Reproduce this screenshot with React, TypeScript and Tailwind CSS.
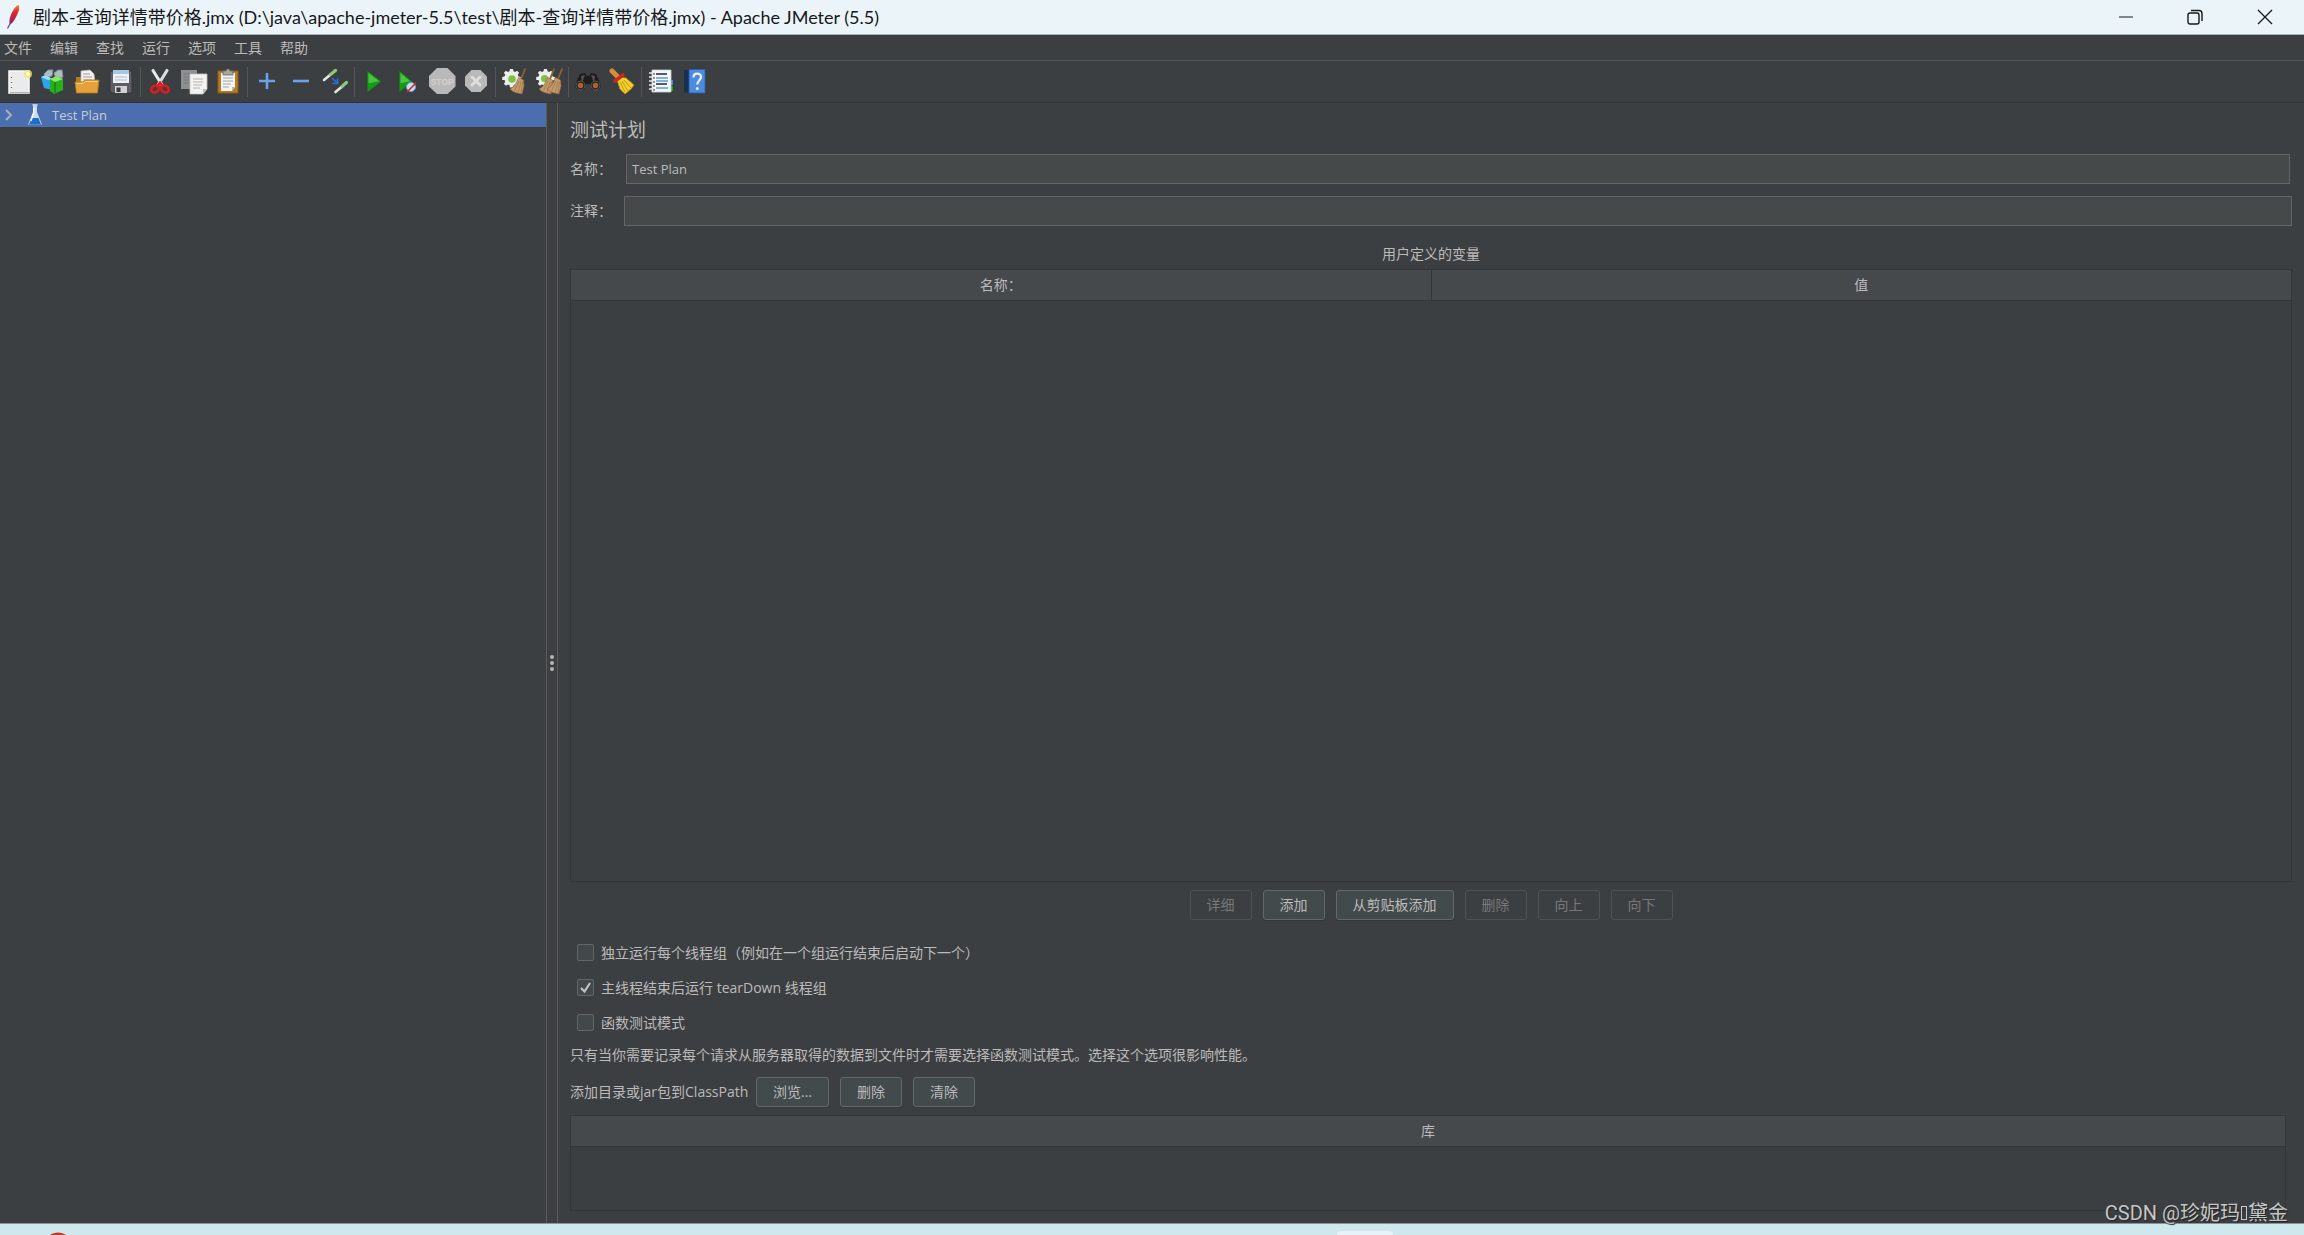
import React, { useState } from "react";

type IconName =
  | "new" | "templates" | "open" | "save" | "cut" | "copy" | "paste" | "plus" | "minus" | "toggle"
  | "start" | "startNoPause" | "stop" | "shutdown" | "clear" | "clearAll" | "search" | "resetSearch"
  | "function" | "help";

const GEAR =
  "M8 1h3l.5 2.300 1.600.700 2-1.300 2 2-1.300 2 .7 1.700 2.300.5v3l-2.300.5-.7 1.700 1.300 2-2 2-2-1.300-1.600.700L11 19.500H8l-.5-2.300-1.600-.7-2 1.300-2-2 1.300-2-.7-1.700L.2 11.900v-3l2.300-.5.7-1.700-1.300-2 2-2 2 1.300 1.600-.7z";

function Broom() {
  return (
    <g>
      <path d="M23 1 19 11" stroke="#8a6238" strokeWidth="1.800" strokeLinecap="round" />
      <path d="M16.500 9.500 21.500 12l.5 6-2 8-5-1-4-1.500-3-2.500c4-2 6-5 8.500-11.500z" fill="#c39a6b" stroke="#8a6238" strokeWidth=".6" />
      <path d="m17 13-4.500 10M19 13.500l-3 11.500M20.500 14l-1.500 11" stroke="#9a7345" strokeWidth=".7" fill="none" />
    </g>
  );
}

function Glyph({ name }: { name: IconName }) {
  switch (name) {
    case "new":
      return (
        <g>
          <path d="M3 3h20v22H3z" fill="#ebebeb" stroke="#fafafa" strokeWidth="1.500" />
          <path d="M4 24.500h19" stroke="#b5b5b5" />
          <path d="M5.500 9v1M5.500 14v1M5.500 19v1" stroke="#666" strokeWidth="1.200" />
          <circle cx="22" cy="6" r="4" fill="#f5e663" opacity=".8" />
          <circle cx="22" cy="6" r="2" fill="#fffce0" />
        </g>
      );
    case "templates":
      return (
        <g>
          <path d="M4 6 8 2h5l-1 6-7 2zM14 5l4-3h4l1 7-7 3z" fill="#aebcc4" stroke="#7d8a92" />
          <path d="m1 9 5-2 6 4v11l-8-2z" fill="#2aa5e8" />
          <path d="m1 9 5-2 6 4-4 1z" fill="#9fdcf7" />
          <path d="m10 11 7-3 6 3v11l-9 4-4-3z" fill="#25b01c" />
          <path d="m10 11 7-3 6 3-8 3z" fill="#8be86f" />
          <path d="M15 14v11" stroke="#15780f" strokeWidth="1.200" />
        </g>
      );
    case "open":
      return (
        <g>
          <path d="M2 9h5l1 3h15v12H2z" fill="#b9791c" />
          <path d="m7 3 9-1 4 4 1 10H7z" fill="#f2f2f2" stroke="#b5b5b5" strokeWidth=".8" />
          <path d="M9 6h7M9 9h9M9 12h9" stroke="#9a9a9a" />
          <path d="M1 14h8l2-2h14l-1.500 13h-21z" fill="#e3a23a" stroke="#b9791c" strokeWidth=".8" />
          <path d="M2.500 15.500h7l2-2h12" stroke="#f8d083" fill="none" />
        </g>
      );
    case "save":
      return (
        <g>
          <path d="M2 3h22v22H4l-2-2z" fill="#5d5d63" stroke="#37373b" />
          <path d="M5 2h16v13H5z" fill="#eef2f7" />
          <path d="M5 2h16v4H5z" fill="#a9c6e6" />
          <path d="M7 9h12M7 12h12" stroke="#b3bac4" />
          <path d="M7 18h12v7H7z" fill="#d2d2d2" />
          <path d="M8.500 19.500h4V24h-4z" fill="#3a3a3e" />
        </g>
      );
    case "cut":
      return (
        <g fill="none">
          <path d="M6 2.500 15 17M20 2.500 11 17" stroke="#d9dcdd" strokeWidth="3.200" strokeLinecap="round" />
          <path d="M6 3 13 14" stroke="#fff" />
          <ellipse cx="8" cy="21" rx="4" ry="3.200" stroke="#e01b1b" strokeWidth="2.600" transform="rotate(-35 8 21)" />
          <ellipse cx="18" cy="21" rx="4" ry="3.200" stroke="#e01b1b" strokeWidth="2.600" transform="rotate(35 18 21)" />
          <path d="m10.500 18 2.500-3.500 2.500 3.500" stroke="#e01b1b" strokeWidth="2.400" />
        </g>
      );
    case "copy":
      return (
        <g>
          <path d="M0 2h16v19H0z" fill="#8d8f91" />
          <path d="M3 6h10M3 9h10M3 12h6M3 15h6" stroke="#75777a" />
          <path d="M9 6h17v15l-4 5H9z" fill="#f3f3f1" stroke="#c4c4c0" strokeWidth=".8" />
          <path d="M26 21h-4v5z" fill="#bdbdb9" />
          <path d="M12 11h10M12 14h10M12 17h9M12 20h7" stroke="#b2b2b0" />
        </g>
      );
    case "paste":
      return (
        <g>
          <path d="M3 3h20v22H3z" fill="#b87a26" stroke="#8e5b17" />
          <path d="M6 5h14v14l-3 4H6z" fill="#f3f3f1" />
          <path d="M20 19h-3v4z" fill="#b5b5b0" />
          <path d="M8 10h10M8 13h10M8 16h8M8 19h6" stroke="#a6a6a3" />
          <path d="M8 3h3l1-2h2l1 2h3v4H8z" fill="#a5a69d" stroke="#66675f" strokeWidth=".8" />
        </g>
      );
    case "plus":
      return <path d="M13 5v16M5 13h16" stroke="#6ba1ea" strokeWidth="2.600" />;
    case "minus":
      return <path d="M5 13h16" stroke="#6ba1ea" strokeWidth="2.600" />;
    case "toggle":
      return (
        <g strokeLinecap="round">
          <path d="m2 12 6-5" stroke="#e4e6e4" strokeWidth="2.600" />
          <path d="m8.500 6.500 5-4" stroke="#8cc878" strokeWidth="3.200" />
          <path d="m13.500 24 6-5" stroke="#e4e6e4" strokeWidth="2.600" />
          <path d="m20 18.500 4.500-4" stroke="#8cc878" strokeWidth="3.200" />
          <path d="m10.500 10.500 5 5m0-4.500v4.500h-4.500" stroke="#2372dd" strokeWidth="1.600" fill="none" />
        </g>
      );
    case "start":
      return (
        <g>
          <path d="M6.500 3 20 13.500 6.500 24z" fill="#0f9d13" />
          <path d="M7.500 5 18 13.300l-10.500 2z" fill="#49c443" />
        </g>
      );
    case "startNoPause":
      return (
        <g>
          <path d="M4.500 3 17 13.500 4.500 24z" fill="#0f9d13" />
          <path d="M5.500 5 15 13.300l-9.500 2z" fill="#49c443" />
          <circle cx="16" cy="19" r="4.500" fill="#c9def2" stroke="#6ba0d8" />
          <path d="m12 24 9-9" stroke="#d62323" strokeWidth="1.600" />
        </g>
      );
    case "stop":
      return (
        <g>
          <path d="M8 0h10.500L26.500 8v10.500L18.500 26H8L0 18.500V8z" fill="#b9b9b9" />
          <text x="13.200" y="16.500" textAnchor="middle" fontSize="8.500" fontWeight="700" fontFamily="Liberation Sans, sans-serif" fill="#d2d2d2">STOP</text>
        </g>
      );
    case "shutdown":
      return (
        <g>
          <path d="M8.500 2h9l6.500 6.500v9L17.500 24h-9L2 17.500v-9z" fill="#b9b9b9" />
          <path d="m9 9 8 8m0-8-8 8" stroke="#dedede" strokeWidth="3" strokeLinecap="round" />
        </g>
      );
    case "clear":
      return (
        <g>
          <path d={GEAR} fill="#eceeec" />
          <circle cx="10" cy="11" r="3.800" fill="#7dc044" />
          <Broom />
        </g>
      );
    case "clearAll":
      return (
        <g>
          <path d={GEAR} fill="#eceeec" />
          <circle cx="8.500" cy="10.500" r="3.500" fill="#7dc044" />
          <g transform="translate(-5 0)"><Broom /></g>
          <g transform="translate(3 0)"><Broom /></g>
        </g>
      );
    case "search":
      return (
        <g>
          <path d="m5 6 5-1 2 3h2l2-3 5 1 5 11-1 4-8 1-2-6h-4l-2 6-8-1-1-4z" fill="#1d1b1b" />
          <path d="m6 8 4-1-3 8zM20 8l-4-1 3 8z" fill="#545252" />
          <circle cx="5.500" cy="17.500" r="4.500" fill="#282626" stroke="#5a5858" />
          <circle cx="20.500" cy="17.500" r="4.500" fill="#282626" stroke="#5a5858" />
          <circle cx="5.500" cy="17.500" r="2.700" fill="#b35f2c" />
          <circle cx="20.500" cy="17.500" r="2.700" fill="#b35f2c" />
        </g>
      );
    case "resetSearch":
      return (
        <g>
          <path d="m3 3 6 6" stroke="#d88d35" strokeWidth="5" strokeLinecap="round" />
          <path d="m10 9 7 1 8 7-3 4-6 5-5-5-3-9z" fill="#f3cf2b" stroke="#b88f12" strokeWidth=".8" />
          <path d="m13 13 6 10M15 12l7 8M11 14l5 10" stroke="#c19b16" fill="none" />
          <path d="m6 13 8-6" stroke="#c8281f" strokeWidth="3.600" strokeLinecap="round" />
        </g>
      );
    case "function":
      return (
        <g>
          <path d="M21 12h4v5h-4z" fill="#2f8ee8" />
          <path d="M21 18h4v5h-4z" fill="#17a31c" />
          <path d="M4 2h19v22H4z" fill="#f4f6f9" stroke="#ccd2da" strokeWidth=".8" />
          <path d="M8 6h11M8 16h11" stroke="#25292e" strokeWidth="1.600" />
          <path d="M8 10h12M8 13h12M8 20h12" stroke="#5b9be0" strokeWidth="1.400" />
          <path d="M1 5h6M1 9h6M1 13h6M1 17h6M1 21h6" stroke="#e9e9e9" strokeWidth="1.600" />
          <path d="M5 6h2M5 10h2M5 14h2M5 18h2M5 22h2" stroke="#333" />
        </g>
      );
    case "help":
      return (
        <g>
          <path d="M2 2h6v23l-6-1z" fill="#182f52" />
          <path d="M7 1.500h16V25H7z" fill="#4c8be0" stroke="#2a5da6" strokeWidth=".8" />
          <path d="M11.500 9.500c0-5 7.500-5 7.500-.5 0 3-3.700 3.500-3.700 7.500" stroke="#e9f1fc" strokeWidth="2.200" fill="none" />
          <circle cx="15.300" cy="20.500" r="1.500" fill="#e9f1fc" />
        </g>
      );
  }
}

const toolGroups: { icon: IconName; label: string }[][] = [
  [
    { icon: "new", label: "新建" },
    { icon: "templates", label: "模板" },
    { icon: "open", label: "打开" },
    { icon: "save", label: "保存" },
  ],
  [
    { icon: "cut", label: "剪切" },
    { icon: "copy", label: "复制" },
    { icon: "paste", label: "粘贴" },
  ],
  [
    { icon: "plus", label: "展开" },
    { icon: "minus", label: "折叠" },
    { icon: "toggle", label: "切换" },
  ],
  [
    { icon: "start", label: "启动" },
    { icon: "startNoPause", label: "不停顿开始" },
    { icon: "stop", label: "停止" },
    { icon: "shutdown", label: "关闭" },
  ],
  [
    { icon: "clear", label: "清除" },
    { icon: "clearAll", label: "清除全部" },
  ],
  [
    { icon: "search", label: "查找" },
    { icon: "resetSearch", label: "重置搜索" },
  ],
  [
    { icon: "function", label: "函数助手" },
    { icon: "help", label: "帮助" },
  ],
];

const menus = ["文件", "编辑", "查找", "运行", "选项", "工具", "帮助"];

function TitleBar() {
  return (
    <header className="flex h-[35px] shrink-0 items-center border-b border-[#a9b3b7] bg-[#ebf4f8] text-[#16181a]">
      <svg viewBox="0 0 16 26" className="ml-1.5 h-[26px] w-4 shrink-0" aria-hidden="true">
        <defs>
          <linearGradient id="feather" x1="0" y1="0" x2="0" y2="1">
            <stop offset="0" stopColor="#f0902a" />
            <stop offset=".35" stopColor="#dc2a2c" />
            <stop offset=".8" stopColor="#b01f52" />
            <stop offset="1" stopColor="#5f2a84" />
          </linearGradient>
        </defs>
        <path d="M12.500 1c1.500 2 .5 6-1.500 10s-4 8-7 9.500c-1.500-3 0-8 2-12S10 1.500 12.500 1z" fill="url(#feather)" />
        <path d="m4.500 19-3 5.500" stroke="#6c3a86" strokeWidth="1.200" />
      </svg>
      <h1 className="ml-[11px] grow truncate font-['Lato','Noto_Sans_CJK_SC',sans-serif] text-[18px] leading-6">
        剧本-查询详情带价格.jmx (D:\java\apache-jmeter-5.5\test\剧本-查询详情带价格.jmx) - Apache JMeter (5.5)
      </h1>
      <button aria-label="最小化" className="flex h-full w-[69px] items-center justify-center">
        <svg viewBox="0 0 16 16" className="size-4" stroke="currentColor"><path d="M1 8h14" /></svg>
      </button>
      <button aria-label="还原" className="flex h-full w-[70px] items-center justify-center">
        <svg viewBox="0 0 16 16" className="size-4" stroke="currentColor" strokeWidth="1.400" fill="none">
          <rect x="1" y="4" width="11" height="11" rx="2" />
          <path d="M4 1.500h8a3 3 0 0 1 3 3V12" />
        </svg>
      </button>
      <button aria-label="关闭" className="mr-1 flex h-full w-[70px] items-center justify-center">
        <svg viewBox="0 0 16 16" className="size-4" stroke="currentColor" strokeWidth="1.300"><path d="m1 1 14 14M15 1 1 15" /></svg>
      </button>
    </header>
  );
}

function ToolBar() {
  return (
    <div role="toolbar" aria-label="工具栏" className="flex h-[42px] shrink-0 items-center border-b border-[#313335] pl-0.5">
      {toolGroups.map((group, index) => (
        <React.Fragment key={group[0].icon}>
          {index > 0 && (
            <div className="flex w-[5px] justify-center">
              <span className="h-[30px] w-px bg-[#545657]" />
            </div>
          )}
          {group.map((tool) => (
            <button key={tool.icon} aria-label={tool.label} className="flex h-9 w-[34px] items-center justify-center">
              <svg viewBox="0 0 27 27" className="size-[27px]" fill="none" aria-hidden="true">
                <Glyph name={tool.icon} />
              </svg>
            </button>
          ))}
        </React.Fragment>
      ))}
    </div>
  );
}

function Tree() {
  return (
    <nav role="tree" className="w-[547px] shrink-0 border-r border-[#5c5a55]">
      <div role="treeitem" aria-selected="true" className="flex h-6 items-center bg-[#4b6eaf] pl-1">
        <svg viewBox="0 0 10 12" className="h-3 w-2.5" stroke="#a9afb8" strokeWidth="2" fill="none"><path d="m2 1 5 5-5 5" /></svg>
        <svg viewBox="0 0 16 22" className="ml-[13px] h-[22px] w-4" aria-hidden="true">
          <path d="M6 2h4v6l5 12.500H1L6 8z" fill="#c9dcec" />
          <path d="M4.500 14h7l2.500 6.500H2z" fill="#1b6fc9" />
          <path d="M5.500 1h5" stroke="#e8eef4" strokeWidth="1.500" />
          <path d="M7 4v5l-3 8" stroke="#fff" strokeWidth="1.200" fill="none" />
        </svg>
        <span className="ml-[9px] text-[13px] text-[#c8ccd2]">Test Plan</span>
      </div>
    </nav>
  );
}

function Btn({ children, disabled = false }: { children: React.ReactNode; disabled?: boolean }) {
  return (
    <button
      disabled={disabled}
      className="h-[30px] rounded-[3px] border border-[#646866] bg-[#434a4c] px-4 shadow-[0_1px_0_#35383a] disabled:border-[#505252] disabled:bg-transparent disabled:text-[#777879] disabled:shadow-none"
    >
      {children}
    </button>
  );
}

function Check({ id, label, initial = false }: { id: string; label: string; initial?: boolean }) {
  const [checked, setChecked] = useState(initial);
  return (
    <div className="flex h-[35px] items-center pl-[7px]">
      <span className="relative flex size-[17px]">
        <input
          id={id}
          type="checkbox"
          checked={checked}
          onChange={(event) => setChecked(event.target.checked)}
          className="size-[17px] appearance-none rounded-[2px] border border-[#626665] bg-[#43494a]"
        />
        {checked && (
          <svg viewBox="0 0 17 17" className="pointer-events-none absolute inset-0" stroke="#bfc3c4" strokeWidth="2.200" fill="none">
            <path d="m4 9 3.500 3.500L13 4" />
          </svg>
        )}
      </span>
      <label htmlFor={id} className="pl-[7px]">{label}</label>
    </div>
  );
}

const inputClass = "h-[30px] min-w-0 grow border border-[#646464] bg-[#45494a] px-[5px] text-[13px] outline-none";

function TestPlan() {
  return (
    <main className="flex min-w-0 grow flex-col border-l border-[#5c5a55] px-3">
      <h2 className="mt-[13px] text-[19px] leading-7">测试计划</h2>
      <div className="mt-2.5 flex items-center pr-0.5">
        <label htmlFor="plan-name" className="w-14">名称：</label>
        <input id="plan-name" defaultValue="Test Plan" className={inputClass} />
      </div>
      <div className="mt-3 flex items-center">
        <label htmlFor="plan-comment" className="w-[54px]">注释：</label>
        <input id="plan-comment" className={inputClass} />
      </div>
      <div className="mt-[18px] flex grow flex-col">
        <table className="w-full grow table-fixed border-collapse border border-[#333638]">
          <caption className="pb-[5px] leading-5">用户定义的变量</caption>
          <thead>
            <tr className="h-[31px] bg-[#45494b]">
              <th scope="col" className="border border-[#333638] font-normal">名称：</th>
              <th scope="col" className="border border-[#333638] font-normal">值</th>
            </tr>
          </thead>
          <tbody>
            <tr><td colSpan={2} /></tr>
          </tbody>
        </table>
      </div>
      <div className="mt-2 flex justify-center gap-[11px]">
        <Btn disabled>详细</Btn>
        <Btn>添加</Btn>
        <Btn>从剪贴板添加</Btn>
        <Btn disabled>删除</Btn>
        <Btn disabled>向上</Btn>
        <Btn disabled>向下</Btn>
      </div>
      <div className="mt-[15px]">
        <Check id="serialize" label="独立运行每个线程组（例如在一个组运行结束后启动下一个）" />
        <Check id="teardown" label="主线程结束后运行 tearDown 线程组" initial />
        <Check id="functional" label="函数测试模式" />
      </div>
      <p className="mt-[3px] leading-6">只有当你需要记录每个请求从服务器取得的数据到文件时才需要选择函数测试模式。选择这个选项很影响性能。</p>
      <div className="mt-2.5 flex items-center">
        <span className="w-[186px]">添加目录或jar包到ClassPath</span>
        <div className="flex gap-[11px]">
          <Btn>浏览...</Btn>
          <Btn>删除</Btn>
          <Btn>清除</Btn>
        </div>
      </div>
      <div className="mt-2 mr-1.5 mb-3 h-24 shrink-0">
        <table className="h-full w-full border-collapse border border-[#333638]">
          <thead>
            <tr className="h-[31px] bg-[#45494b]">
              <th scope="col" className="border border-[#333638] font-normal">库</th>
            </tr>
          </thead>
          <tbody>
            <tr><td /></tr>
          </tbody>
        </table>
      </div>
    </main>
  );
}

export default function App() {
  return (
    <div className="relative flex h-screen flex-col overflow-hidden bg-[#3c3f41] font-['Open_Sans','Noto_Sans_CJK_SC',sans-serif] text-[14px] leading-5 text-[#bbbbbb]">
      <TitleBar />
      <nav className="flex h-[26px] shrink-0 items-center gap-[18px] border-b border-[#555555] pl-1">
        {menus.map((menu) => (
          <button key={menu}>{menu}</button>
        ))}
      </nav>
      <ToolBar />
      <div className="flex min-h-0 grow">
        <Tree />
        <div role="separator" className="flex w-2.5 shrink-0 flex-col items-center justify-center gap-0.5">
          <span className="size-1 rounded-full bg-[#b4b4b4]" />
          <span className="size-1 rounded-full bg-[#b4b4b4]" />
          <span className="size-1 rounded-full bg-[#b4b4b4]" />
        </div>
        <TestPlan />
      </div>
      <footer className="flex h-3 shrink-0 items-end overflow-hidden border-t border-[#8b9498] bg-[#cfe8ee]">
        <svg viewBox="0 0 18 3" className="ml-[49px] h-[3px] w-[18px]" aria-hidden="true"><path d="M1 3c4-3.500 12-3.500 16 0z" fill="#c43a26" /></svg>
        <span className="ml-[1270px] h-1 w-14 rounded-t bg-[#e6f3f7]" />
      </footer>
      <div className="absolute right-4 bottom-2.5 font-['Roboto','Noto_Sans_CJK_SC',sans-serif] text-[20px] leading-6 text-[#c4c6c7] [text-shadow:1px_1px_1px_#222]">
        CSDN @珍妮玛<span className="mx-px inline-block h-3.5 w-1.5 border border-current" />黛金
      </div>
    </div>
  );
}
